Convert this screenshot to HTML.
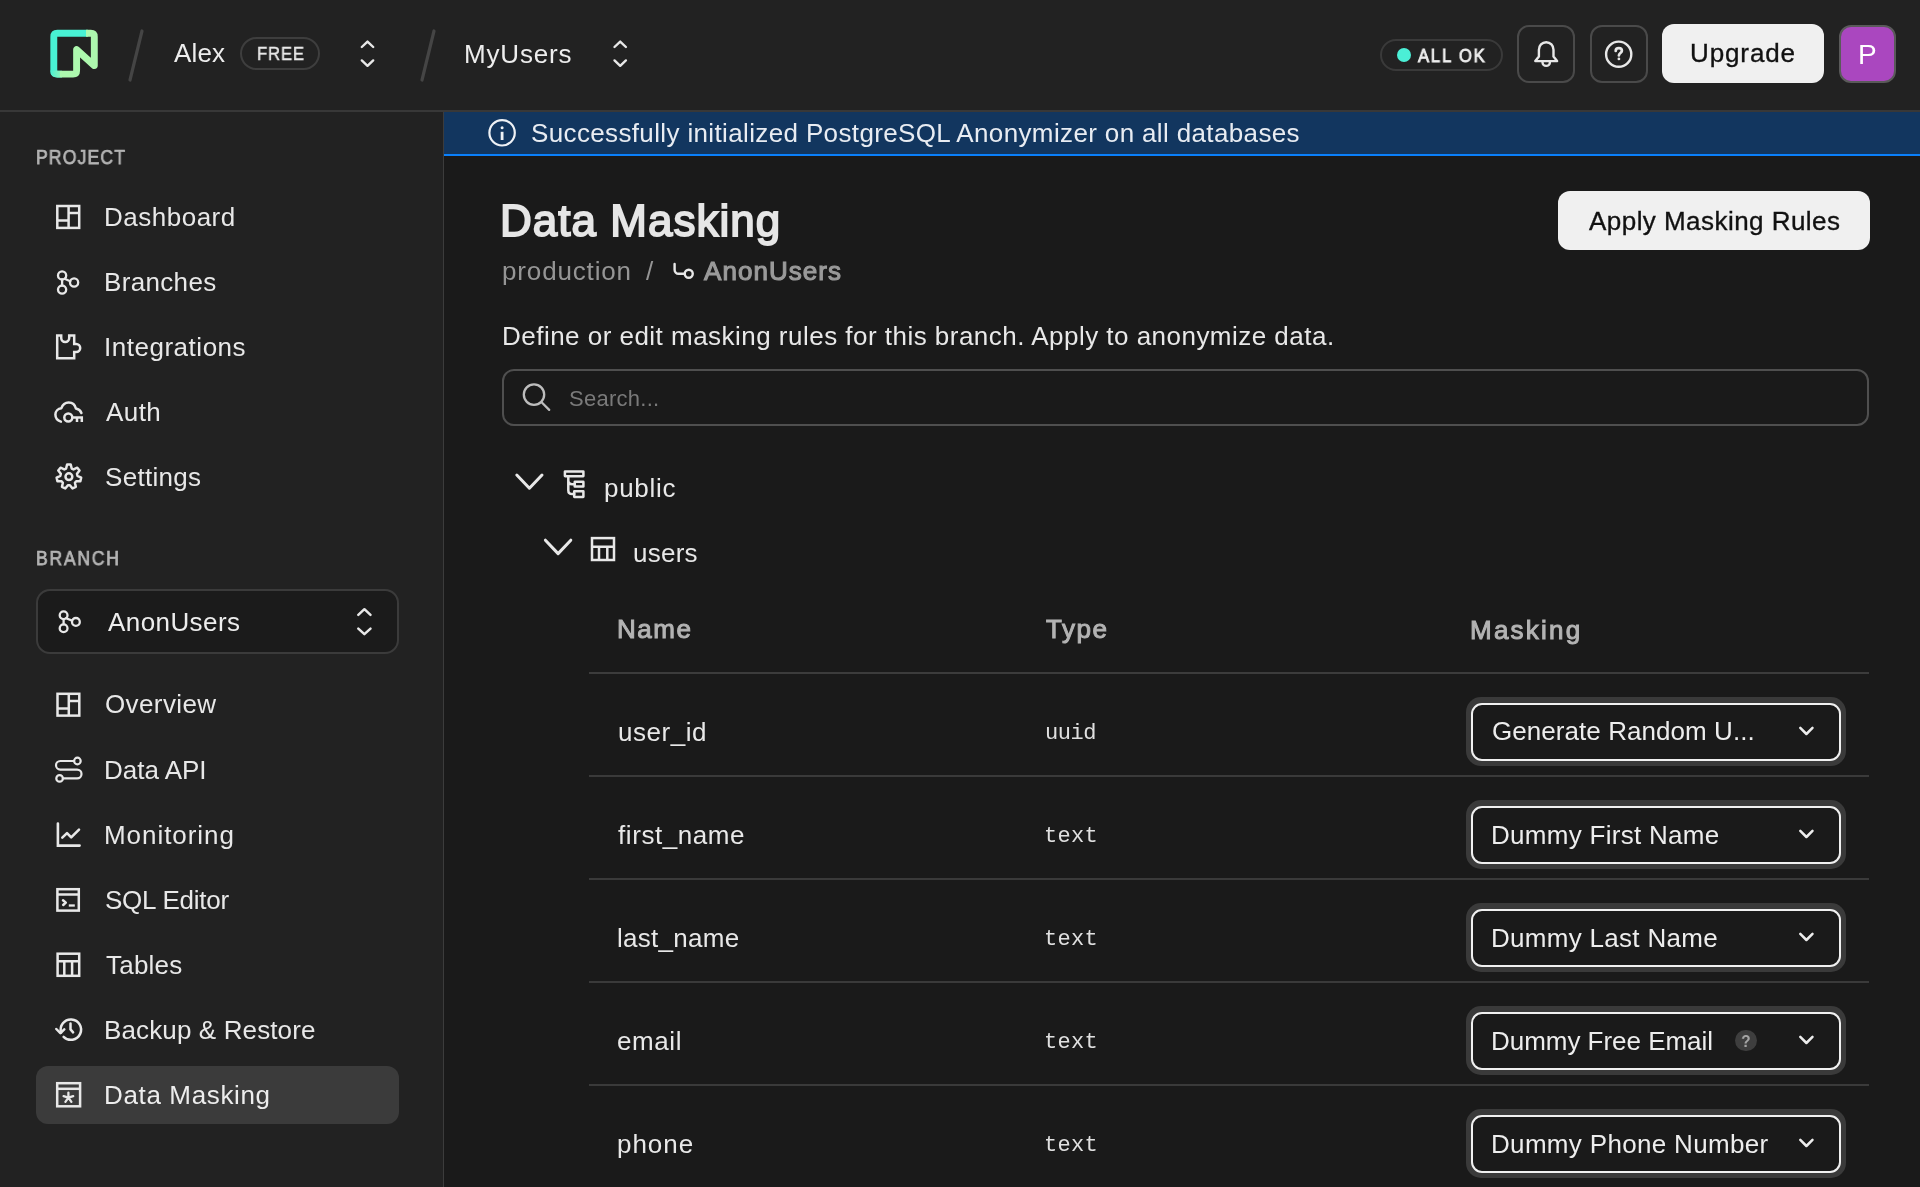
<!DOCTYPE html>
<html><head><meta charset="utf-8"><style>
html,body{margin:0;padding:0;}
body{width:1920px;height:1187px;position:relative;overflow:hidden;background:#1a1a1a;font-family:"Liberation Sans",sans-serif;}
.t{position:absolute;white-space:nowrap;line-height:1;will-change:transform;}
.a{position:absolute;box-sizing:border-box;}
svg.i{position:absolute;left:0;top:0;overflow:visible}
</style></head><body>
<!-- header -->
<div class="a" style="left:0;top:0;width:1920px;height:112px;background:#222222;border-bottom:2.5px solid #383838"></div>
<!-- sidebar -->
<div class="a" style="left:0;top:112px;width:444px;height:1075px;background:#222222;border-right:1.5px solid #3c3c3c"></div>
<!-- banner -->
<div class="a" style="left:444px;top:112px;width:1476px;height:44px;background:#12365f;border-bottom:2.2px solid #0a80fb"></div>
<!-- header pills/buttons -->
<div class="a" style="left:240px;top:37px;width:80px;height:33px;border:2px solid #3e3e3e;border-radius:17px"></div>
<div class="a" style="left:1380px;top:39px;width:123px;height:32px;border:2px solid #3a3a3a;border-radius:16px"></div>
<div class="a" style="left:1396.5px;top:48px;width:14px;height:14px;border-radius:50%;background:#4befd6"></div>
<div class="a" style="left:1517px;top:25px;width:58px;height:58px;border:2px solid #4a4a4a;border-radius:12px"></div>
<div class="a" style="left:1589.5px;top:25px;width:58px;height:58px;border:2px solid #4a4a4a;border-radius:12px"></div>
<div class="a" style="left:1662px;top:24px;width:162px;height:59px;background:#f0f0f0;border-radius:12px"></div>
<div class="a" style="left:1839px;top:24.5px;width:57px;height:58px;background:#aa47bf;border:2px solid #5a5a5a;border-radius:12px"></div>
<!-- branch selector -->
<div class="a" style="left:36px;top:589px;width:363px;height:64.5px;background:#1b1b1b;border:2px solid #3b3b3b;border-radius:14px"></div>
<!-- active nav -->
<div class="a" style="left:36px;top:1066px;width:363px;height:58px;background:#3b3b3b;border-radius:12px"></div>
<!-- apply button -->
<div class="a" style="left:1558px;top:191px;width:312px;height:58.5px;background:#f0f0f0;border-radius:12px"></div>
<!-- search -->
<div class="a" style="left:502px;top:369px;width:1367px;height:57px;border:2px solid #4f4f4f;border-radius:12px"></div>
<!-- table lines -->
<div class="a" style="left:589px;top:672px;width:1280px;height:2px;background:#3c3c3c"></div>
<div class="a" style="left:589px;top:775px;width:1280px;height:2px;background:#3a3a3a"></div>
<div class="a" style="left:589px;top:878px;width:1280px;height:2px;background:#3a3a3a"></div>
<div class="a" style="left:589px;top:981px;width:1280px;height:2px;background:#3a3a3a"></div>
<div class="a" style="left:589px;top:1084px;width:1280px;height:2px;background:#3a3a3a"></div>
<!-- selects -->
<div class="a" style="left:1466px;top:697px;width:379.5px;height:69px;background:#3a3a3a;border-radius:15px"></div>
<div class="a" style="left:1471px;top:702.5px;width:369.5px;height:58.5px;background:#1a1a1a;border:2.2px solid #f0f0f0;border-radius:11px"></div>
<div class="a" style="left:1466px;top:800px;width:379.5px;height:69px;background:#3a3a3a;border-radius:15px"></div>
<div class="a" style="left:1471px;top:805.5px;width:369.5px;height:58.5px;background:#1a1a1a;border:2.2px solid #f0f0f0;border-radius:11px"></div>
<div class="a" style="left:1466px;top:903px;width:379.5px;height:69px;background:#3a3a3a;border-radius:15px"></div>
<div class="a" style="left:1471px;top:908.5px;width:369.5px;height:58.5px;background:#1a1a1a;border:2.2px solid #f0f0f0;border-radius:11px"></div>
<div class="a" style="left:1466px;top:1006px;width:379.5px;height:69px;background:#3a3a3a;border-radius:15px"></div>
<div class="a" style="left:1471px;top:1011.5px;width:369.5px;height:58.5px;background:#1a1a1a;border:2.2px solid #f0f0f0;border-radius:11px"></div>
<div class="a" style="left:1466px;top:1109px;width:379.5px;height:69px;background:#3a3a3a;border-radius:15px"></div>
<div class="a" style="left:1471px;top:1114.5px;width:369.5px;height:58.5px;background:#1a1a1a;border:2.2px solid #f0f0f0;border-radius:11px"></div>
<div class="a" style="left:1735.2px;top:1029.6px;width:21.4px;height:21.4px;border-radius:50%;background:#3e3e3e"></div>
<div class="t" style="left:1741.2px;top:1033.6px;font-size:16px;font-weight:700;color:#a8a8a8;transform:scaleX(0.95)">?</div>

<svg class="i" width="1920" height="1187" viewBox="0 0 1920 1187">
 <!-- logo -->
 <g fill="none" stroke-width="6.9" stroke-linejoin="round" stroke-linecap="butt">
  <path d="M62 74.1 H57.3 Q53.8 74.1 53.8 70.6 V36.7 Q53.8 33.2 57.3 33.2 H88" stroke="#48f1d4"/>
  <path d="M60 74.1 H57.3 Q53.8 74.1 53.8 70.6" stroke="url(#lgb)"/>
  <path d="M86 33.2 H90.8 Q94.3 33.2 94.3 36.7 V65.6 L76.6 49.6 V70.6 Q76.6 74.1 73.1 74.1 H60" stroke="#adf8ae"/>
 </g>
 <defs><linearGradient id="lgb" x1="50" y1="0" x2="66" y2="0" gradientUnits="userSpaceOnUse"><stop offset="0" stop-color="#48f1d4"/><stop offset="1" stop-color="#adf8ae"/></linearGradient></defs>
 <!-- slashes -->
 <line x1="142" y1="31" x2="130" y2="80" stroke="#454545" stroke-width="3.2" stroke-linecap="round"/>
 <line x1="434" y1="31" x2="422" y2="80" stroke="#454545" stroke-width="3.2" stroke-linecap="round"/>
 <g fill="none" stroke="#e8e8e8" stroke-width="2.4" stroke-linecap="round" stroke-linejoin="round">
  <!-- header chevrons -->
  <path d="M361.8 47 L367.5 41.6 L373.2 47 M361.8 60.4 L367.5 65.8 L373.2 60.4"/>
  <path d="M614.5 47 L620.2 41.6 L625.9 47 M614.5 60.4 L620.2 65.8 L625.9 60.4"/>
  <!-- bell -->
  <path d="M1535.3 61.1 L1538.9 56.6 V49.8 C1538.9 45.5 1542 42.2 1546.2 42.2 C1550.4 42.2 1553.5 45.5 1553.5 49.8 V56.6 L1557.1 61.1 Z"/>
  <path d="M1542.5 62.2 A3.7 3.7 0 0 0 1549.9 62.2"/>
  <!-- help -->
  <circle cx="1618.7" cy="54.2" r="12.6"/>
  <path d="M1615.7 50.9 C1615.7 49.1 1617 48.1 1618.8 48.1 C1620.6 48.1 1621.9 49.2 1621.9 50.8 C1621.9 52.9 1618.9 53.3 1618.9 55.5" stroke-width="2.7"/>
 </g>
 <circle cx="1618.9" cy="58.9" r="1.4" fill="#e8e8e8"/>
 <!-- sidebar icons -->
 <g fill="none" stroke="#e8e8e8" stroke-width="2.5" stroke-linecap="round" stroke-linejoin="round">
  <!-- dashboard -->
  <rect x="57.3" y="206" width="21.9" height="21.9" stroke-linecap="butt" stroke-linejoin="miter"/>
  <path d="M68.6 206 V227.9 M57.3 220.6 H68.6 M68.6 213.1 H79.2" stroke-linecap="butt"/>
  <!-- branches -->
  <g stroke-width="2.3"><circle cx="62.1" cy="275.4" r="4.1"/><circle cx="62.1" cy="289.6" r="4.1"/><circle cx="74.1" cy="282.5" r="4.1"/>
  <path d="M62.1 279.5 V285.5 M64.6 278.8 L70.2 281.3"/></g>
  <!-- integrations -->
  <path d="M61.2 335.4 H57.2 V358.3 H74.2 V352 H76.2 A4 4 0 0 0 76.2 344 H74.2 V335.4 H69.2 V338 A4 4 0 0 1 61.2 338 Z" stroke-linecap="butt" stroke-linejoin="miter"/>
  <!-- auth -->
  <path d="M60.9 421.6 C57.6 420.6 55.4 417.8 55.4 414.6 C55.4 411.2 58 408.6 61.4 408.2 C62.6 404.6 65.4 402.5 68.7 402.5 C72.3 402.5 75.1 405 75.9 408.6 C78.6 409.1 80.6 410.8 81.4 413"/>
  <circle cx="68.3" cy="417.5" r="4"/>
  <path d="M72.3 417.5 H81.8 V422 M77 417.5 V422" stroke-linecap="butt" stroke-linejoin="miter"/>
  <!-- settings -->
  <path d="M66.10 468.57 L67.08 464.54 L70.72 464.54 L71.70 468.57 L73.51 469.44 L77.28 467.69 L79.54 470.54 L77.00 473.82 L77.45 475.78 L81.16 477.63 L80.36 481.18 L76.20 481.24 L74.95 482.81 L75.82 486.87 L72.54 488.45 L69.91 485.24 L67.89 485.24 L65.26 488.45 L61.98 486.87 L62.85 482.81 L61.60 481.24 L57.44 481.18 L56.64 477.63 L60.35 475.78 L60.80 473.82 L58.26 470.54 L60.52 467.69 L64.29 469.44 Z"/>
  <circle cx="68.9" cy="476.7" r="3.4"/>
  <!-- branch selector icon -->
  <g stroke-width="2.3"><circle cx="63.6" cy="615.2" r="3.9"/><circle cx="63.6" cy="628.2" r="3.9"/><circle cx="75.9" cy="621.9" r="3.9"/>
  <path d="M63.6 619.1 V624.3 M66.1 618.3 L72.1 620.6"/></g>
  <!-- sidebar chevrons -->
  <path d="M358.3 614.8 L364.4 609.2 L370.5 614.8 M358.3 628.6 L364.4 634.2 L370.5 628.6"/>
  <!-- overview -->
  <rect x="57.5" y="693.8" width="21.8" height="21.8" stroke-linecap="butt" stroke-linejoin="miter"/>
  <path d="M68.8 693.8 V715.6 M57.5 708.4 H68.8 M68.8 700.9 H79.3" stroke-linecap="butt"/>
  <!-- data api -->
  <g stroke-width="2.2"><circle cx="77.4" cy="761" r="3.3"/><circle cx="59.6" cy="778.4" r="3.3"/>
  <path d="M74.1 761 H60.3 A4.3 4.3 0 0 0 60.3 769.6 H77.1 A4.4 4.4 0 0 1 77.1 778.4 H62.9"/></g>
  <!-- monitoring -->
  <path d="M57.9 823.5 V845.6 H79.6" stroke-width="2.6" stroke-linejoin="miter"/>
  <path d="M62.3 837.6 L67 833.1 L71.2 837.4 L79 829.6" stroke-width="2.6"/>
  <!-- sql editor -->
  <rect x="57.4" y="889.2" width="21.4" height="21.4" stroke-linecap="butt" stroke-linejoin="miter"/>
  <path d="M57.4 894.5 H78.8" stroke-linecap="butt"/>
  <path d="M63 900.2 L65.8 902.6 L63.2 905"/>
  <path d="M68.8 905.5 H74.8" stroke-width="2.3" stroke-linecap="butt"/>
  <!-- tables -->
  <rect x="57.6" y="953.7" width="21.6" height="22.1" stroke-linecap="butt" stroke-linejoin="miter"/>
  <path d="M57.6 961.2 H79.2 M64.3 961.2 V975.8 M72.1 961.2 V975.8" stroke-linecap="butt"/>
  <!-- backup -->
  <path d="M63.6 1036.8 A10.2 10.2 0 1 0 61.1 1032.6"/>
  <path d="M56.3 1029.0 L60.4 1033.2 L64.3 1029.4"/>
  <path d="M70.5 1023.4 V1029.4 L73.1 1032.4"/>
  <!-- data masking -->
  <rect x="57.2" y="1083.2" width="22.9" height="23.1" stroke-linecap="butt" stroke-linejoin="miter"/>
  <path d="M57.2 1088.8 H80.1" stroke-linecap="butt"/>
  <path d="M68.4 1092.6 V1097.7 M68.4 1097.7 L73.2 1096.2 M68.4 1097.7 L71.4 1101.9 M68.4 1097.7 L65.4 1101.9 M68.4 1097.7 L63.6 1096.2" stroke-width="2.3"/>
 </g>
 <!-- main icons -->
 <g fill="none" stroke="#eef1f5" stroke-width="2.2" stroke-linecap="round" stroke-linejoin="round">
  <circle cx="502.1" cy="132.8" r="12.7"/>
  <path d="M502.1 131.8 V140" stroke-width="2.8" stroke-linecap="butt"/>
 </g>
 <circle cx="502.1" cy="127.8" r="1.5" fill="#eef1f5"/>
 <g fill="none" stroke="#e8e8e8" stroke-width="2.4" stroke-linecap="round" stroke-linejoin="round">
  <!-- breadcrumb branch -->
  <path d="M674.6 264 V269.8 A4 4 0 0 0 678.6 273.8 H684.7"/>
  <circle cx="688.75" cy="273.7" r="4"/>
 </g>
 <!-- search icon -->
 <g fill="none" stroke="#bdbdbd" stroke-width="2.3" stroke-linecap="round">
  <circle cx="534" cy="394.6" r="10.2"/>
  <path d="M541.6 402.3 L549.2 409.9"/>
 </g>
 <g fill="none" stroke="#e8e8e8" stroke-width="2.5" stroke-linecap="round" stroke-linejoin="round">
  <!-- tree chevrons -->
  <path d="M516.8 475 L529.4 488.2 L542 475" stroke-width="3"/>
  <path d="M545.4 540.2 L558.1 553.6 L570.8 540.2" stroke-width="3"/>
  <!-- schema icon -->
  <rect x="564.9" y="471.4" width="18.5" height="4.8" rx="0.2"/>
  <rect x="574.7" y="481.8" width="8.7" height="4.8" rx="0.2"/>
  <rect x="574.2" y="491.2" width="9.2" height="5.8" rx="0.2"/>
  <path d="M568.3 476.4 V490.2 Q568.3 494.1 572.2 494.1 H574.2 M568.3 480.5 Q568.3 484.2 572.2 484.2 H574.7"/>
  <!-- table icon -->
  <rect x="592" y="538.1" width="22" height="21.9" stroke-linejoin="miter"/>
  <path d="M592 546.7 H614 M599 546.7 V560 M607.3 546.7 V560" stroke-linecap="butt"/>
 </g>
 <!-- select chevrons -->
 <g fill="none" stroke="#ededed" stroke-width="2.5" stroke-linecap="round" stroke-linejoin="round">
  <path d="M1800.3 727.9 L1806.4 734 L1812.5 727.9"/>
  <path d="M1800.3 830.9 L1806.4 837 L1812.5 830.9"/>
  <path d="M1800.3 933.9 L1806.4 940 L1812.5 933.9"/>
  <path d="M1800.3 1036.9 L1806.4 1043 L1812.5 1036.9"/>
  <path d="M1800.3 1139.9 L1806.4 1146 L1812.5 1139.9"/>
 </g>
</svg>

<div class="t" style="left:174.00px;top:40.30px;font-size:26px;font-weight:400;color:#ededed;letter-spacing:0.141px;font-family:'Liberation Sans';">Alex</div>
<div class="t" style="left:256.62px;top:43.80px;font-size:19px;font-weight:400;color:#e8e8e8;letter-spacing:0.902px;font-family:'Liberation Sans';-webkit-text-stroke:0.45px #e8e8e8;transform:scaleX(0.88);transform-origin:0 0">FREE</div>
<div class="t" style="left:464.40px;top:40.60px;font-size:26px;font-weight:400;color:#ededed;letter-spacing:0.841px;font-family:'Liberation Sans';">MyUsers</div>
<div class="t" style="left:1418.00px;top:46.70px;font-size:18.5px;font-weight:400;color:#ededed;letter-spacing:2.022px;font-family:'Liberation Sans';-webkit-text-stroke:0.9px #ededed;transform:scaleX(0.9);transform-origin:0 0">ALL OK</div>
<div class="t" style="left:1690.00px;top:40.40px;font-size:26px;font-weight:400;color:#111111;letter-spacing:0.888px;font-family:'Liberation Sans';-webkit-text-stroke:0.35px #111">Upgrade</div>
<div class="t" style="left:1857.50px;top:40.90px;font-size:28px;font-weight:400;color:#ffffff;letter-spacing:0.000px;font-family:'Liberation Sans';">P</div>
<div class="t" style="left:36.00px;top:148.00px;font-size:19.5px;font-weight:400;color:#b4b4b4;letter-spacing:1.299px;font-family:'Liberation Sans';-webkit-text-stroke:0.75px #b4b4b4;transform:scaleX(0.9);transform-origin:0 0">PROJECT</div>
<div class="t" style="left:104.25px;top:204.25px;font-size:26px;font-weight:400;color:#e8e8e8;letter-spacing:0.502px;font-family:'Liberation Sans';">Dashboard</div>
<div class="t" style="left:104.10px;top:269.30px;font-size:26px;font-weight:400;color:#e8e8e8;letter-spacing:0.337px;font-family:'Liberation Sans';">Branches</div>
<div class="t" style="left:104.00px;top:334.00px;font-size:26px;font-weight:400;color:#e8e8e8;letter-spacing:0.521px;font-family:'Liberation Sans';">Integrations</div>
<div class="t" style="left:106.00px;top:398.70px;font-size:26px;font-weight:400;color:#e8e8e8;letter-spacing:0.425px;font-family:'Liberation Sans';">Auth</div>
<div class="t" style="left:105.00px;top:463.80px;font-size:26px;font-weight:400;color:#e8e8e8;letter-spacing:0.308px;font-family:'Liberation Sans';">Settings</div>
<div class="t" style="left:35.60px;top:549.10px;font-size:19.5px;font-weight:400;color:#b4b4b4;letter-spacing:1.970px;font-family:'Liberation Sans';-webkit-text-stroke:0.75px #b4b4b4;transform:scaleX(0.9);transform-origin:0 0">BRANCH</div>
<div class="t" style="left:107.70px;top:609.00px;font-size:26px;font-weight:400;color:#ededed;letter-spacing:0.423px;font-family:'Liberation Sans';">AnonUsers</div>
<div class="t" style="left:105.00px;top:691.40px;font-size:26px;font-weight:400;color:#e8e8e8;letter-spacing:0.389px;font-family:'Liberation Sans';">Overview</div>
<div class="t" style="left:104.00px;top:756.70px;font-size:26px;font-weight:400;color:#e8e8e8;letter-spacing:-0.004px;font-family:'Liberation Sans';">Data API</div>
<div class="t" style="left:104.00px;top:821.80px;font-size:26px;font-weight:400;color:#e8e8e8;letter-spacing:0.952px;font-family:'Liberation Sans';">Monitoring</div>
<div class="t" style="left:105.00px;top:887.00px;font-size:26px;font-weight:400;color:#e8e8e8;letter-spacing:-0.223px;font-family:'Liberation Sans';">SQL Editor</div>
<div class="t" style="left:106.00px;top:951.80px;font-size:26px;font-weight:400;color:#e8e8e8;letter-spacing:0.229px;font-family:'Liberation Sans';">Tables</div>
<div class="t" style="left:104.00px;top:1016.70px;font-size:26px;font-weight:400;color:#e8e8e8;letter-spacing:0.127px;font-family:'Liberation Sans';">Backup &amp; Restore</div>
<div class="t" style="left:104.00px;top:1081.50px;font-size:26px;font-weight:400;color:#ededed;letter-spacing:0.646px;font-family:'Liberation Sans';">Data Masking</div>
<div class="t" style="left:531.00px;top:120.30px;font-size:26px;font-weight:400;color:#e8ecf2;letter-spacing:0.361px;font-family:'Liberation Sans';">Successfully initialized PostgreSQL Anonymizer on all databases</div>
<div class="t" style="left:500.30px;top:199.00px;font-size:44px;font-weight:400;color:#e6e6e6;letter-spacing:1.015px;font-family:'Liberation Sans';-webkit-text-stroke:1.8px #e6e6e6">Data Masking</div>
<div class="t" style="left:502.40px;top:258.00px;font-size:26px;font-weight:400;color:#959595;letter-spacing:0.849px;font-family:'Liberation Sans';">production</div>
<div class="t" style="left:646.00px;top:258.00px;font-size:26px;font-weight:400;color:#959595;letter-spacing:0.000px;font-family:'Liberation Sans';">/</div>
<div class="t" style="left:704.00px;top:258.00px;font-size:26px;font-weight:400;color:#9a9a9a;letter-spacing:1.048px;font-family:'Liberation Sans';-webkit-text-stroke:1.1px #9a9a9a">AnonUsers</div>
<div class="t" style="left:1589.00px;top:208.00px;font-size:26px;font-weight:400;color:#111111;letter-spacing:0.457px;font-family:'Liberation Sans';-webkit-text-stroke:0.35px #111">Apply Masking Rules</div>
<div class="t" style="left:501.70px;top:323.30px;font-size:26px;font-weight:400;color:#e8e8e8;letter-spacing:0.477px;font-family:'Liberation Sans';">Define or edit masking rules for this branch. Apply to anonymize data.</div>
<div class="t" style="left:569.00px;top:387.60px;font-size:22px;font-weight:400;color:#7a7a7a;letter-spacing:0.259px;font-family:'Liberation Sans';">Search...</div>
<div class="t" style="left:603.50px;top:475.00px;font-size:26px;font-weight:400;color:#e8e8e8;letter-spacing:0.713px;font-family:'Liberation Sans';">public</div>
<div class="t" style="left:632.60px;top:540.00px;font-size:26px;font-weight:400;color:#e8e8e8;letter-spacing:0.255px;font-family:'Liberation Sans';">users</div>
<div class="t" style="left:616.50px;top:616.00px;font-size:26px;font-weight:400;color:#b3b3b3;letter-spacing:1.535px;font-family:'Liberation Sans';-webkit-text-stroke:1.0px #b3b3b3">Name</div>
<div class="t" style="left:1045.50px;top:615.70px;font-size:26px;font-weight:400;color:#b3b3b3;letter-spacing:1.564px;font-family:'Liberation Sans';-webkit-text-stroke:1.0px #b3b3b3">Type</div>
<div class="t" style="left:1469.90px;top:616.90px;font-size:26px;font-weight:400;color:#b3b3b3;letter-spacing:2.241px;font-family:'Liberation Sans';-webkit-text-stroke:1.0px #b3b3b3">Masking</div>
<div class="t" style="left:617.50px;top:719.10px;font-size:26px;font-weight:400;color:#e8e8e8;letter-spacing:0.531px;font-family:'Liberation Sans';">user_id</div>
<div class="t" style="left:618.30px;top:822.10px;font-size:26px;font-weight:400;color:#e8e8e8;letter-spacing:0.576px;font-family:'Liberation Sans';">first_name</div>
<div class="t" style="left:617.30px;top:925.00px;font-size:26px;font-weight:400;color:#e8e8e8;letter-spacing:0.275px;font-family:'Liberation Sans';">last_name</div>
<div class="t" style="left:617.30px;top:1027.80px;font-size:26px;font-weight:400;color:#e8e8e8;letter-spacing:0.586px;font-family:'Liberation Sans';">email</div>
<div class="t" style="left:617.30px;top:1130.60px;font-size:26px;font-weight:400;color:#e8e8e8;letter-spacing:0.965px;font-family:'Liberation Sans';">phone</div>
<div class="t" style="left:1045.20px;top:722.80px;font-size:22px;font-weight:400;color:#e0e0e0;letter-spacing:-0.469px;font-family:'Liberation Mono';">uuid</div>
<div class="t" style="left:1044.00px;top:825.80px;font-size:22px;font-weight:400;color:#e0e0e0;letter-spacing:0.298px;font-family:'Liberation Mono';">text</div>
<div class="t" style="left:1044.00px;top:928.80px;font-size:22px;font-weight:400;color:#e0e0e0;letter-spacing:0.298px;font-family:'Liberation Mono';">text</div>
<div class="t" style="left:1044.00px;top:1031.80px;font-size:22px;font-weight:400;color:#e0e0e0;letter-spacing:0.298px;font-family:'Liberation Mono';">text</div>
<div class="t" style="left:1044.00px;top:1134.80px;font-size:22px;font-weight:400;color:#e0e0e0;letter-spacing:0.298px;font-family:'Liberation Mono';">text</div>
<div class="t" style="left:1491.50px;top:718.40px;font-size:26px;font-weight:400;color:#ededed;letter-spacing:0.060px;font-family:'Liberation Sans';">Generate Random U...</div>
<div class="t" style="left:1490.50px;top:822.30px;font-size:26px;font-weight:400;color:#ededed;letter-spacing:0.284px;font-family:'Liberation Sans';">Dummy First Name</div>
<div class="t" style="left:1490.50px;top:924.90px;font-size:26px;font-weight:400;color:#ededed;letter-spacing:0.297px;font-family:'Liberation Sans';">Dummy Last Name</div>
<div class="t" style="left:1490.50px;top:1027.90px;font-size:26px;font-weight:400;color:#ededed;letter-spacing:-0.026px;font-family:'Liberation Sans';">Dummy Free Email</div>
<div class="t" style="left:1490.50px;top:1130.90px;font-size:26px;font-weight:400;color:#ededed;letter-spacing:0.324px;font-family:'Liberation Sans';">Dummy Phone Number</div>
</body></html>
